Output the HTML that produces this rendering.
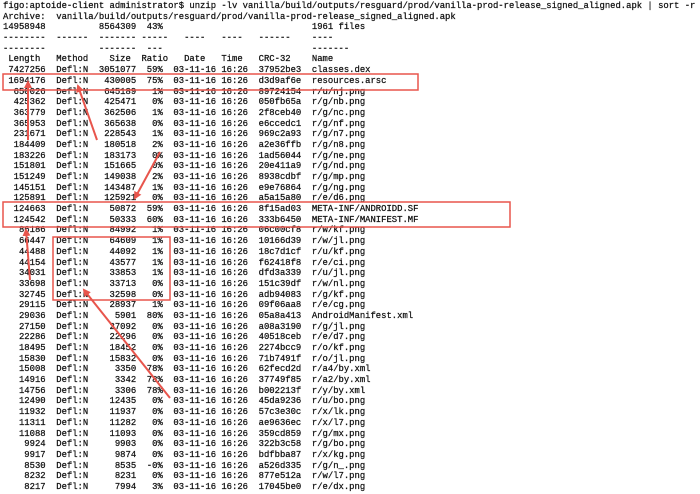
<!DOCTYPE html>
<html><head><meta charset="utf-8">
<style>
html,body{margin:0;padding:0;background:#fff;width:700px;height:494px;overflow:hidden}
pre{position:absolute;left:3px;top:1px;margin:0;font-family:"Liberation Mono",monospace;font-size:8.9px;line-height:10.69px;color:#111;-webkit-text-stroke:0.25px #111;white-space:pre}
svg{position:absolute;left:0;top:0}
</style></head><body>
<pre>figo:aptoide-client administrator$ unzip -lv vanilla/build/outputs/resguard/prod/vanilla-prod-release_signed_aligned.apk | sort -r
Archive:  vanilla/build/outputs/resguard/prod/vanilla-prod-release_signed_aligned.apk
14958948          8564309  43%                            1961 files
--------  ------  ------- -----   ----   ----   ------    ----
--------          -------  ---                            -------
 Length   Method    Size  Ratio   Date   Time   CRC-32    Name
 7427256  Defl:N  3051077  59%  03-11-16 16:26  37952be3  classes.dex
 1694176  Defl:N   430005  75%  03-11-16 16:26  d3d9af6e  resources.arsc
  650026  Defl:N   645189   1%  03-11-16 16:26  89724154  r/u/nj.png
  425362  Defl:N   425471   0%  03-11-16 16:26  050fb65a  r/g/nb.png
  363779  Defl:N   362506   1%  03-11-16 16:26  2f8ceb40  r/g/nc.png
  365953  Defl:N   365638   0%  03-11-16 16:26  e6ccedc1  r/g/nf.png
  231671  Defl:N   228543   1%  03-11-16 16:26  969c2a93  r/g/n7.png
  184409  Defl:N   180518   2%  03-11-16 16:26  a2e36ffb  r/g/n8.png
  183226  Defl:N   183173   0%  03-11-16 16:26  1ad56044  r/g/ne.png
  151801  Defl:N   151665   0%  03-11-16 16:26  20e411a9  r/g/nd.png
  151249  Defl:N   149038   2%  03-11-16 16:26  8938cdbf  r/g/mp.png
  145151  Defl:N   143487   1%  03-11-16 16:26  e9e76864  r/g/ng.png
  125891  Defl:N   125921   0%  03-11-16 16:26  a5a15a80  r/e/d6.png
  124663  Defl:N    50872  59%  03-11-16 16:26  8f15ad03  META-INF/ANDROIDD.SF
  124542  Defl:N    50333  60%  03-11-16 16:26  333b6450  META-INF/MANIFEST.MF
   86186  Defl:N    84992   1%  03-11-16 16:26  06c00cf8  r/w/kf.png
   66447  Defl:N    64609   1%  03-11-16 16:26  10166d39  r/w/jl.png
   44488  Defl:N    44092   1%  03-11-16 16:26  18c7d1cf  r/u/kf.png
   44154  Defl:N    43577   1%  03-11-16 16:26  f62418f8  r/e/ci.png
   34031  Defl:N    33853   1%  03-11-16 16:26  dfd3a339  r/u/jl.png
   33698  Defl:N    33713   0%  03-11-16 16:26  151c39df  r/w/nl.png
   32745  Defl:N    32598   0%  03-11-16 16:26  adb94083  r/g/kf.png
   29115  Defl:N    28937   1%  03-11-16 16:26  09f06aa8  r/e/cg.png
   29036  Defl:N     5901  80%  03-11-16 16:26  05a8a413  AndroidManifest.xml
   27150  Defl:N    27092   0%  03-11-16 16:26  a08a3190  r/g/jl.png
   22286  Defl:N    22296   0%  03-11-16 16:26  40518ceb  r/e/d7.png
   18495  Defl:N    18452   0%  03-11-16 16:26  2274bcc9  r/o/kf.png
   15830  Defl:N    15832   0%  03-11-16 16:26  71b7491f  r/o/jl.png
   15008  Defl:N     3350  78%  03-11-16 16:26  62fecd2d  r/a4/by.xml
   14916  Defl:N     3342  78%  03-11-16 16:26  37749f85  r/a2/by.xml
   14756  Defl:N     3306  78%  03-11-16 16:26  b002213f  r/y/by.xml
   12490  Defl:N    12435   0%  03-11-16 16:26  45da9236  r/u/bo.png
   11932  Defl:N    11937   0%  03-11-16 16:26  57c3e30c  r/x/lk.png
   11311  Defl:N    11282   0%  03-11-16 16:26  ae9636ec  r/x/l7.png
   11088  Defl:N    11093   0%  03-11-16 16:26  359cd859  r/g/mx.png
    9924  Defl:N     9903   0%  03-11-16 16:26  322b3c58  r/g/bo.png
    9917  Defl:N     9874   0%  03-11-16 16:26  bdfbba87  r/x/kg.png
    8530  Defl:N     8535  -0%  03-11-16 16:26  a526d335  r/g/n_.png
    8232  Defl:N     8231   0%  03-11-16 16:26  877e512a  r/w/l7.png
    8217  Defl:N     7994   3%  03-11-16 16:26  17045be0  r/e/dx.png</pre>
<svg width="700" height="494" viewBox="0 0 700 494">
<defs><marker id="h" markerWidth="8" markerHeight="8" refX="6" refY="4" orient="auto" markerUnits="userSpaceOnUse"><path d="M0,0 L8,4 L0,8 Z" fill="#e8554c"/></marker></defs>
<g fill="none" stroke="#e8554c" stroke-width="1.5">
<rect x="3" y="74" width="415" height="16"/>
<rect x="3" y="202" width="507" height="25"/>
<rect x="53" y="237" width="117" height="63"/>
</g>
<g stroke="#e8554c" stroke-width="2" marker-end="url(#h)">
<line x1="28" y1="140" x2="28" y2="82"/>
<line x1="97" y1="140" x2="78" y2="86"/>
<line x1="160" y1="152" x2="135" y2="198"/>
<line x1="30" y1="280" x2="26" y2="230"/>
<line x1="170" y1="398" x2="84" y2="290"/>
</g>
</svg>
</body></html>
